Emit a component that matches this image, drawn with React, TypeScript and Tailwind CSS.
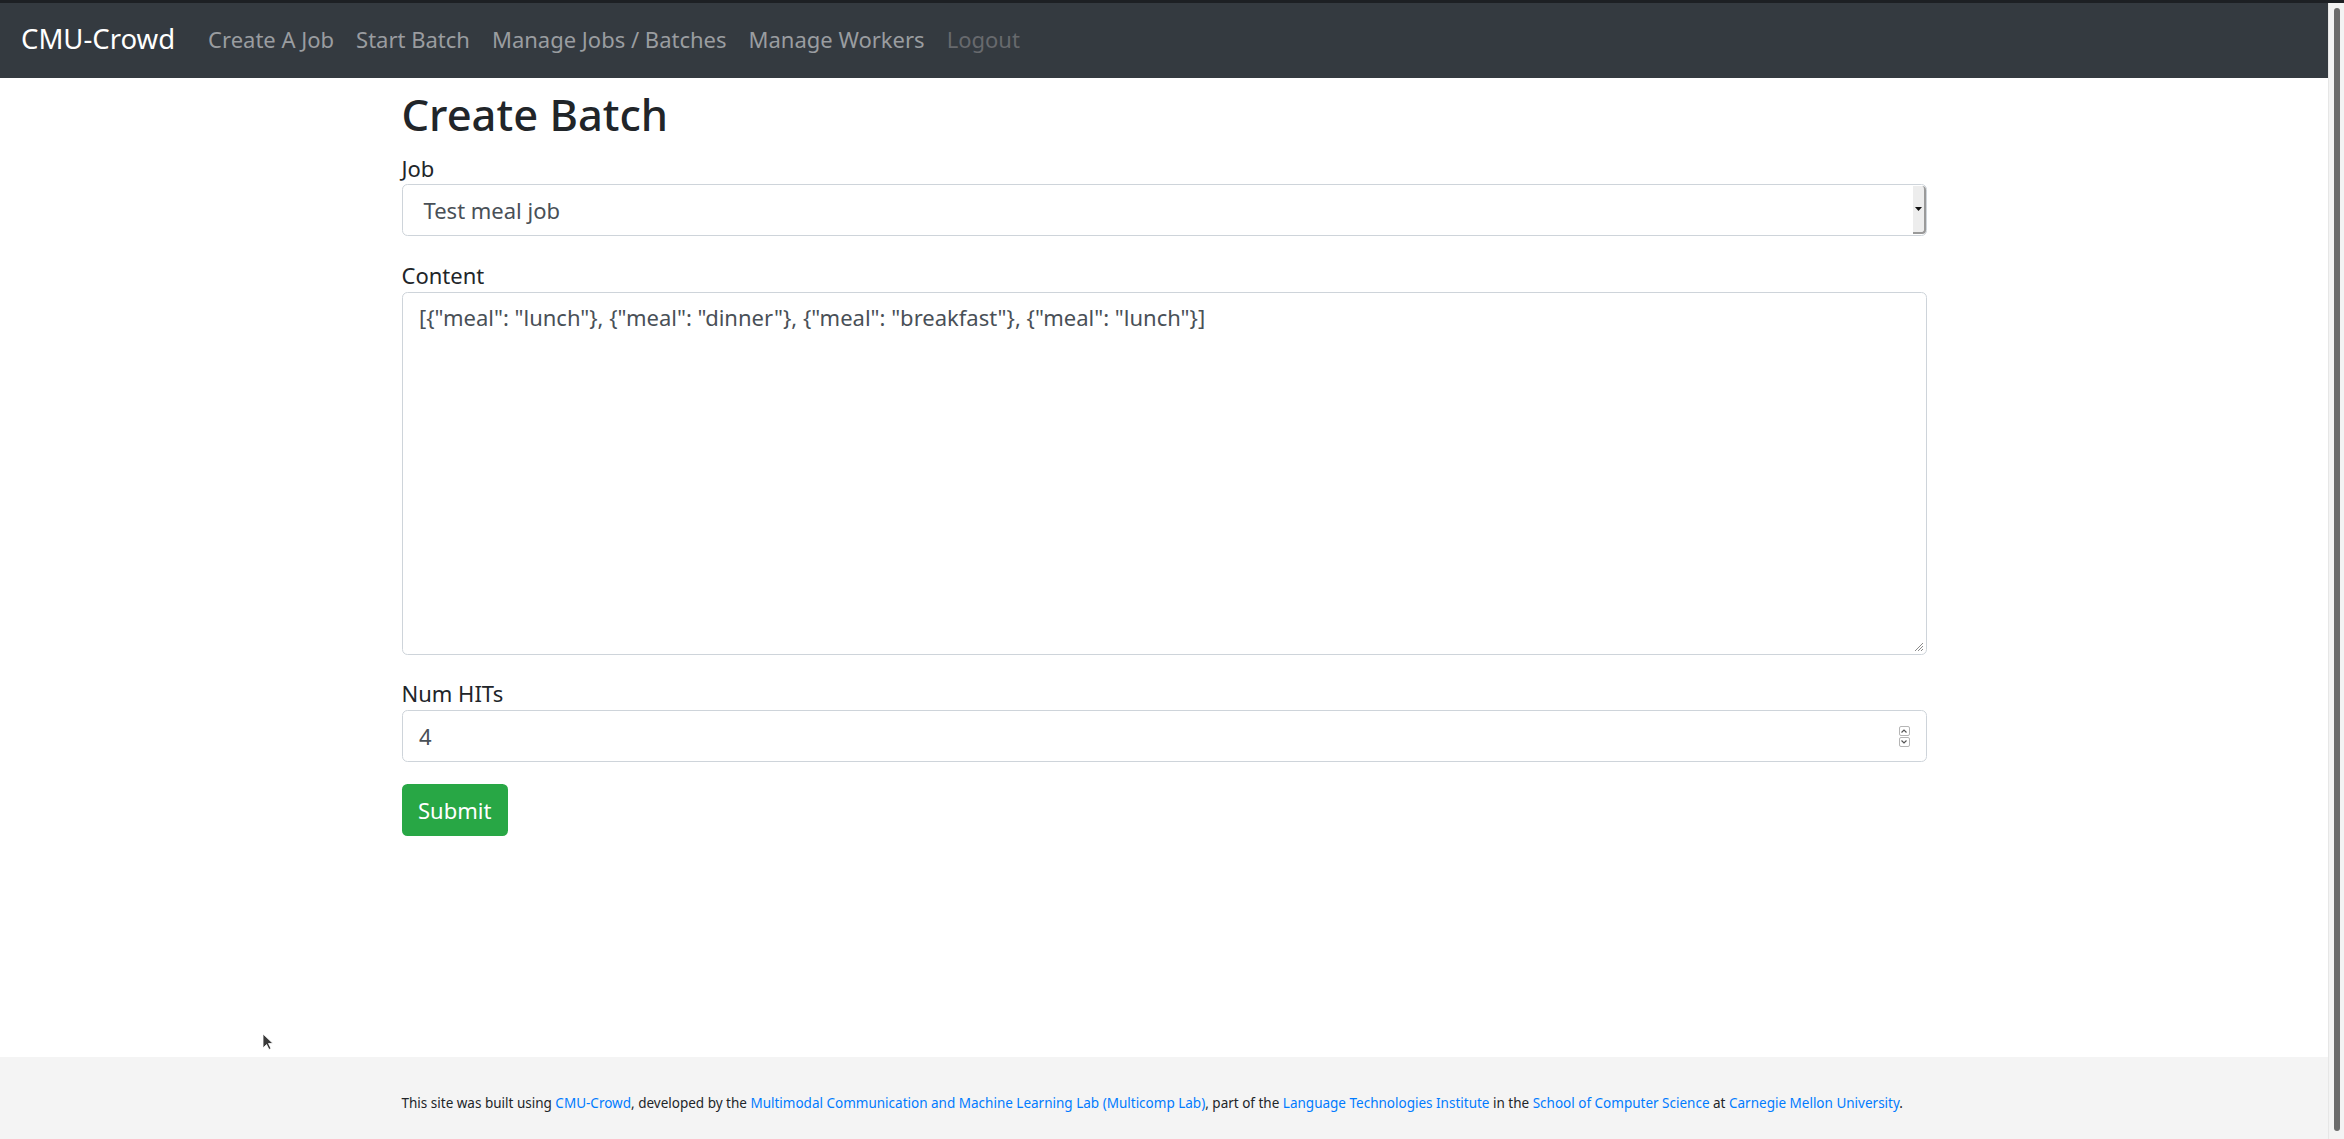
import React from "react";

const links = ["Create A Job", "Start Batch", "Manage Jobs / Batches", "Manage Workers"];

function FooterLink({ children }: { children: React.ReactNode }) {
  return <span className="text-[#007bff]">{children}</span>;
}

export default function App() {
  return (
    <div className="relative flex h-[1139px] w-full flex-col overflow-hidden bg-white font-['Noto_Sans',sans-serif] text-[#212529]">
      <div className="h-[3px] w-full bg-[#1d2024]" />
      <div className="flex min-h-0 flex-1">
        <div className="flex min-w-0 flex-1 flex-col">
          {/* navbar */}
          <nav className="flex h-[75px] items-center bg-[#343a40] px-[21px] pb-[3px]">
            <span className="mr-[22px] text-[27.5px] leading-none text-white">CMU-Crowd</span>
            {links.map((l) => (
              <span key={l} className="px-[11px] text-[22px] leading-none text-[#9a9da0]">
                {l}
              </span>
            ))}
            <span className="px-[11px] text-[22px] leading-none text-[#67696d]">Logout</span>
          </nav>

          <main className="flex-1">
            <div className="mx-auto w-[1525px] pt-[10px]">
              <h1 className="mb-[11px] text-[43.5px] font-medium leading-[53px]">Create Batch</h1>

              <div className="mb-[22px]">
                <label className="block text-[22px] leading-[32px]">Job</label>
                <div className="flex h-[52px] items-stretch rounded-[5.5px] border border-[#ced4da] bg-white">
                  <div className="flex flex-1 items-center pl-[21px] text-[22px] text-[#495057]">
                    Test meal job
                  </div>
                  <div className="my-[1px] flex w-[13px] items-center justify-center rounded-r-[4px] border-r-2 border-b-2 border-[#9a9a9a] bg-[#ededed]">
                    <svg width="7" height="4" viewBox="0 0 7 4">
                      <path d="M0 0h7L3.5 4z" fill="#111" />
                    </svg>
                  </div>
                </div>
              </div>

              <div className="mb-[22px]">
                <label className="block text-[22px] leading-[34px]">Content</label>
                <div className="relative h-[363px] rounded-[5.5px] border border-[#ced4da] bg-white px-[16.5px] pt-[8px] text-[22px] leading-[33px] text-[#495057]">
                  {'[{"meal": "lunch"}, {"meal": "dinner"}, {"meal": "breakfast"}, {"meal": "lunch"}]'}
                  <svg className="absolute bottom-[2px] right-[2px]" width="11" height="11" viewBox="0 0 11 11">
                    <path d="M10 2L2 10M10 5L5 10M10 8L8 10" stroke="#8a8a8a" strokeWidth="1" />
                  </svg>
                </div>
              </div>

              <div className="mb-[22px]">
                <label className="block text-[22px] leading-[33px]">Num HITs</label>
                <div className="flex h-[52px] items-center rounded-[5.5px] border border-[#ced4da] bg-white pl-[16.5px] pr-[16px] text-[22px] text-[#495057]">
                  <span className="flex-1">4</span>
                  <div className="flex flex-col gap-[1px]">
                    <div className="flex h-[10px] w-[11px] items-center justify-center rounded-[2px] border border-[#b5b5b5]">
                      <svg width="6" height="4" viewBox="0 0 6 4">
                        <path d="M0.5 3.5L3 1l2.5 2.5" stroke="#555" fill="none" strokeWidth="1.2" />
                      </svg>
                    </div>
                    <div className="flex h-[10px] w-[11px] items-center justify-center rounded-[2px] border border-[#b5b5b5]">
                      <svg width="6" height="4" viewBox="0 0 6 4">
                        <path d="M0.5 0.5L3 3l2.5-2.5" stroke="#555" fill="none" strokeWidth="1.2" />
                      </svg>
                    </div>
                  </div>
                </div>
              </div>

              <button
                type="button"
                className="h-[52px] rounded-[5.5px] bg-[#28a745] px-[16.5px] text-[22px] text-white"
              >
                Submit
              </button>
            </div>
          </main>

          <footer className="h-[82px] bg-[#f4f4f4] pt-[36px]">
            <p className="mx-auto w-[1525px] whitespace-nowrap text-[13.5px] leading-[20px] text-[#212529]">
              This site was built using <FooterLink>CMU-Crowd</FooterLink>, developed by the{" "}
              <FooterLink>Multimodal Communication and Machine Learning Lab (Multicomp Lab)</FooterLink>, part of the{" "}
              <FooterLink>Language Technologies Institute</FooterLink> in the{" "}
              <FooterLink>School of Computer Science</FooterLink> at <FooterLink>Carnegie Mellon University</FooterLink>.
            </p>
          </footer>
        </div>

        {/* scrollbar */}
        <div className="flex w-[16px] justify-center border-l border-[#e6e6e6] bg-[#f3f3f3] pt-[5px] pb-[8px]">
          <div className="w-[6px] rounded-full bg-[#6b6b6b]" />
        </div>
      </div>

      {/* mouse pointer */}
      <svg className="absolute left-[262px] top-[1033px]" width="12" height="18" viewBox="0 0 12 18">
        <path d="M1 1v14l3.5-3.5 2.5 5 2-1-2.5-5H11z" fill="#3a3a3a" stroke="#fff" strokeWidth="0.8" />
      </svg>
    </div>
  );
}
